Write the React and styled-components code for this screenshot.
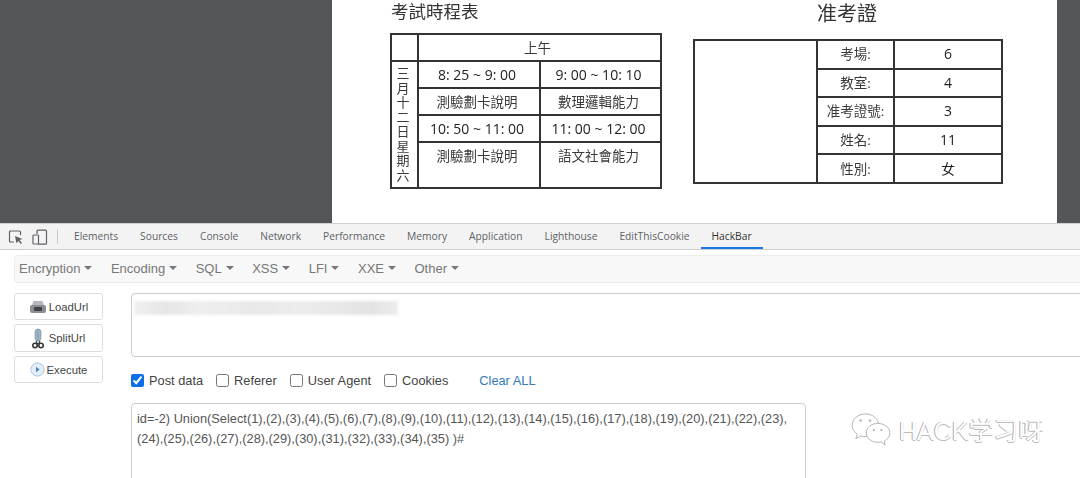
import React from "react";
import styled, { createGlobalStyle } from "styled-components";

const tabs = ["Elements", "Sources", "Console", "Network", "Performance", "Memory", "Application", "Lighthouse", "EditThisCookie", "HackBar"];
const menus = ["Encryption", "Encoding", "SQL", "XSS", "LFI", "XXE", "Other"];
const options = [
  { label: "Post data", checked: true },
  { label: "Referer" },
  { label: "User Agent" },
  { label: "Cookies" },
];
const ticket = [
  ["考場:", "6"],
  ["教室:", "4"],
  ["准考證號:", "3"],
  ["姓名:", "11"],
  ["性別:", "女"],
];

function App() {
  return (
    <Screen>
      <GlobalStyle />
      <Viewer>
        <Sheet>
          <Schedule>
            <ScheduleTitle>考試時程表</ScheduleTitle>
            <ScheduleTable>
              <colgroup>
                <col width="27" />
                <col width="122" />
                <col width="121" />
              </colgroup>
              <tbody>
                <tr>
                  <Cell $h={25} />
                  <Cell colSpan={2}>上午</Cell>
                </tr>
                <tr>
                  <Cell rowSpan={4}>
                    <Vertical>三月十二日星期六</Vertical>
                  </Cell>
                  <TimeCell $h={25}>8: 25 ~ 9: 00</TimeCell>
                  <TimeCell>9: 00 ~ 10: 10</TimeCell>
                </tr>
                <tr>
                  <Cell $h={25}>測驗劃卡說明</Cell>
                  <Cell>數理邏輯能力</Cell>
                </tr>
                <tr>
                  <TimeCell $h={25}>10: 50 ~ 11: 00</TimeCell>
                  <TimeCell>11: 00 ~ 12: 00</TimeCell>
                </tr>
                <tr>
                  <TopCell $h={39}>測驗劃卡說明</TopCell>
                  <TopCell>語文社會能力</TopCell>
                </tr>
              </tbody>
            </ScheduleTable>
          </Schedule>
          <Ticket>
            <TicketTitle>准考證</TicketTitle>
            <TicketTable>
              <colgroup>
                <col width="123" />
                <col width="77" />
                <col width="108" />
              </colgroup>
              <tbody>
                {ticket.map(([label, value], i) => (
                  <tr key={label}>
                    {i === 0 && <Cell rowSpan={5} />}
                    <Cell $h={26.6}>{label}</Cell>
                    <TimeCell>{value}</TimeCell>
                  </tr>
                ))}
              </tbody>
            </TicketTable>
          </Ticket>
        </Sheet>
      </Viewer>

      <DevBar>
        <ToolIcons>
          <svg width="16" height="16" viewBox="0 0 16 16" fill="none" stroke="#5f6368" strokeWidth="1.2">
            <path d="M6 13H2.500a1 1 0 0 1-1-1V3a1 1 0 0 1 1-1h9a1 1 0 0 1 1 1v3" />
            <path d="M7 7l7.500 3-3 1 2.500 3-1.200 1-2.400-3-2 2.200z" fill="#5f6368" stroke="none" />
          </svg>
          <svg width="16" height="16" viewBox="0 0 16 16" fill="none" stroke="#5f6368" strokeWidth="1.2">
            <path d="M5 5V2.200a1 1 0 0 1 1-1h7.500a1 1 0 0 1 1 1v12a1 1 0 0 1-1 1H6" />
            <rect x="1" y="6" width="5.500" height="9" rx="0.8" />
          </svg>
        </ToolIcons>
        <Divider />
        {tabs.map((tab) => (
          <Tab key={tab} $active={tab === "HackBar"}>{tab}</Tab>
        ))}
      </DevBar>

      <Panel>
        <MenuBar>
          {menus.map((menu) => (
            <Menu key={menu}>
              {menu}
              <Caret />
            </Menu>
          ))}
        </MenuBar>
        <Body>
          <Actions>
            <ActionButton $h={27}>
              <svg width="18" height="14" viewBox="0 0 18 14">
                <path d="M3 5l1.500-4h9L15 5z" fill="#b4b8bc" />
                <rect x="1" y="5" width="16" height="8" rx="2" fill="#8b8f93" />
                <rect x="5" y="7" width="8" height="4" rx="1" fill="#3f4346" />
              </svg>
              LoadUrl
            </ActionButton>
            <ActionButton $h={28} $gap={5}>
              <svg width="12" height="21" viewBox="0 0 12 21">
                <rect x="3" y="1" width="6" height="12" rx="3" fill="#9db7c9" stroke="#6f8798" strokeWidth="0.6" />
                <path d="M6 1v12" stroke="#6f8798" strokeWidth="0.6" />
                <circle cx="3" cy="17.500" r="2.200" fill="none" stroke="#33373a" strokeWidth="1.6" />
                <circle cx="9" cy="17.500" r="2.200" fill="none" stroke="#33373a" strokeWidth="1.6" />
                <path d="M4 13l1.500 3M8 13l-1.500 3" stroke="#33373a" strokeWidth="1.2" />
              </svg>
              SplitUrl
            </ActionButton>
            <ActionButton $h={27}>
              <svg width="15" height="15" viewBox="0 0 15 15">
                <circle cx="7.500" cy="7.500" r="6.600" fill="#e4eefa" stroke="#a9c4e6" />
                <path d="M6 4.800l3.600 2.700L6 10.200z" fill="#4a7fc0" />
              </svg>
              Execute
            </ActionButton>
          </Actions>
          <Fields>
            <UrlBox>
              <Smudge />
            </UrlBox>
            <Options>
              {options.map(({ label, checked }) => (
                <Option key={label}>
                  <Check type="checkbox" defaultChecked={checked} />
                  {label}
                </Option>
              ))}
              <ClearAll>Clear ALL</ClearAll>
            </Options>
            <PostBox>
              id=-2) Union(Select(1),(2),(3),(4),(5),(6),(7),(8),(9),(10),(11),(12),(13),(14),(15),(16),(17),(18),(19),(20),(21),(22),(23),(24),(25),(26),(27),(28),(29),(30),(31),(32),(33),(34),(35) )#
            </PostBox>
          </Fields>
        </Body>
      </Panel>

      <Watermark>
        <svg width="42" height="34" viewBox="0 0 42 36" fill="#fff" stroke="#b0b0b0" strokeWidth="1">
          <path d="M15 1C7 1 1 6.500 1 13c0 4 2 7 5.500 9.500L5 27l5.500-2.700c1.500.5 3 .7 4.500.7 7.500 0 14-5 14-12S23 1 15 1z" />
          <path d="M28 11c-6.500 0-12 4.500-12 10s5.500 10 12 10c1.300 0 2.500-.2 3.700-.5L36 34l-1-4.200c3.500-2 6-5 6-8.800 0-5.500-6-10-13-10z" />
          <circle cx="10" cy="8" r="1.400" fill="#bbb" stroke="none" />
          <circle cx="20" cy="8" r="1.400" fill="#bbb" stroke="none" />
          <circle cx="24" cy="18" r="1.200" fill="#bbb" stroke="none" />
          <circle cx="32" cy="18" r="1.200" fill="#bbb" stroke="none" />
        </svg>
        <WatermarkText>HACK学习呀</WatermarkText>
      </Watermark>
    </Screen>
  );
}

const GlobalStyle = createGlobalStyle`
  html, body {
    margin: 0;
    padding: 0;
    background: #fff;
    overflow: hidden;
  }
`;

const Screen = styled.div`
  position: relative;
  width: 1080px;
  height: 478px;
  overflow: hidden;
  font-family: "Liberation Sans", Arial, sans-serif;
`;

const Viewer = styled.div`
  height: 223px;
  padding-left: 332px;
  background: #525659;
  overflow: hidden;
`;

const Sheet = styled.div`
  display: flex;
  width: 725px;
  height: 223px;
  padding-left: 58px;
  gap: 32px;
  box-sizing: border-box;
  background: #fff;
  color: #222;
  font-family: "Open Sans", "Noto Sans CJK TC", sans-serif;
  filter: blur(0.3px);
`;

const Schedule = styled.div`
  width: 271px;
`;

const ScheduleTitle = styled.div`
  height: 32px;
  padding: 1px 0 0 1px;
  font-size: 17.500px;
  line-height: 20px;
  color: #333;
`;

const Ticket = styled.div`
  width: 309px;
`;

const TicketTitle = styled.div`
  height: 39px;
  padding-right: 1px;
  font-size: 20px;
  line-height: 27px;
  text-align: center;
  color: #333;
`;

const ScheduleTable = styled.table`
  width: 270px;
  table-layout: fixed;
  border-collapse: collapse;

  td {
    padding-right: 4px;
  }
`;

const TicketTable = styled(ScheduleTable)`
  width: 308px;

  td {
    padding-right: 0;
  }
`;

const Cell = styled.td`
  height: ${(props) => (props.$h ? `${props.$h}px` : "auto")};
  padding: 0;
  border: 2px solid #333;
  font-size: 13.500px;
  line-height: 16px;
  text-align: center;
  color: #3a3a3a;
`;

const TimeCell = styled(Cell)`
  font-size: 14px;
  color: #222;
`;

const TopCell = styled(Cell)`
  padding-top: 5px;
  vertical-align: top;
`;

const Vertical = styled.div`
  margin: 0 auto;
  writing-mode: vertical-rl;
  font-size: 13px;
  letter-spacing: 1.500px;
  line-height: 18px;
`;

const DevBar = styled.div`
  display: flex;
  align-items: center;
  height: 25px;
  padding-left: 8px;
  background: #f3f3f3;
  border-top: 1px solid #d0d0d0;
  border-bottom: 1px solid #d0d0d0;
`;

const ToolIcons = styled.div`
  display: flex;
  gap: 8px;
  align-items: center;
`;

const Divider = styled.div`
  width: 1px;
  height: 15px;
  margin: 0 5px 0 9px;
  background: #ccc;
`;

const Tab = styled.div`
  align-self: stretch;
  padding: 0 11px;
  font-family: "Open Sans", sans-serif;
  font-size: 10.250px;
  line-height: 25px;
  white-space: nowrap;
  color: ${(props) => (props.$active ? "#333" : "#5f6368")};
  box-shadow: ${(props) => (props.$active ? "inset 0 -2px 0 #1a73e8" : "none")};
`;

const Panel = styled.div`
  padding: 5px 0 0 14px;
`;

const MenuBar = styled.div`
  display: flex;
  gap: 18.500px;
  align-items: center;
  height: 28px;
  box-sizing: border-box;
  margin-right: -4px;
  padding: 0 0 2px 4px;
  background: #f8f8f8;
  border: 1px solid #ececec;
  border-radius: 4px;
  color: #777;
  font-size: 13px;
`;

const Menu = styled.div`
  display: flex;
  align-items: center;
  gap: 4px;
`;

const Caret = styled.span`
  width: 0;
  height: 0;
  border-top: 4px solid #777;
  border-left: 4px solid transparent;
  border-right: 4px solid transparent;
`;

const Body = styled.div`
  display: flex;
  gap: 28px;
  padding-top: 10px;
`;

const Actions = styled.div`
  display: flex;
  flex-direction: column;
  flex: 0 0 89px;
  gap: 4px;
`;

const ActionButton = styled.div`
  display: flex;
  align-items: center;
  justify-content: center;
  gap: ${(props) => props.$gap || 2}px;
  height: ${(props) => props.$h}px;
  box-sizing: border-box;
  background: #fff;
  border: 1px solid #ddd;
  border-radius: 3px;
  font-size: 11.300px;
  color: #444;
`;

const Fields = styled.div`
  flex: 1;
  min-width: 0;
`;

const UrlBox = styled.div`
  position: relative;
  width: 960px;
  height: 64px;
  box-sizing: border-box;
  border: 1px solid #ccc;
  border-radius: 4px;
`;

const Smudge = styled.div`
  position: absolute;
  top: 7px;
  left: 2px;
  width: 264px;
  height: 14px;
  background: linear-gradient(90deg, #f0f0f0, #e6e6e6 12%, #eeeeee 25%, #e9e9e9 45%, #ececec 65%, #e3e3e3 90%, #ededed);
  filter: blur(1.500px);
`;

const Options = styled.div`
  display: flex;
  align-items: center;
  height: 46px;
  font-size: 12.800px;
  color: #444;
`;

const Option = styled.label`
  display: flex;
  align-items: center;
  gap: 5px;
  margin-right: 13px;
`;

const Check = styled.input`
  width: 13px;
  height: 13px;
  margin: 0;
  accent-color: #0b6fe8;
`;

const ClearAll = styled.a`
  margin-left: 18px;
  color: #337ab7;
`;

const PostBox = styled.div`
  width: 675px;
  height: 100px;
  box-sizing: border-box;
  padding: 5px 12px 5px 5px;
  border: 1px solid #ccc;
  border-radius: 4px;
  font-size: 12.800px;
  line-height: 20px;
  color: #555;
  word-break: break-word;
`;

const Watermark = styled.div`
  position: absolute;
  left: 850px;
  top: 413px;
  display: flex;
  align-items: center;
  gap: 7px;
`;

const WatermarkText = styled.span`
  margin-top: -3px;
  font-family: "Liberation Sans", "Noto Sans CJK SC", sans-serif;
  font-size: 25px;
  color: #fff;
  text-shadow: -1px 0 0 #aaa, 0 1px 0 #bbb;
`;

export default App;
